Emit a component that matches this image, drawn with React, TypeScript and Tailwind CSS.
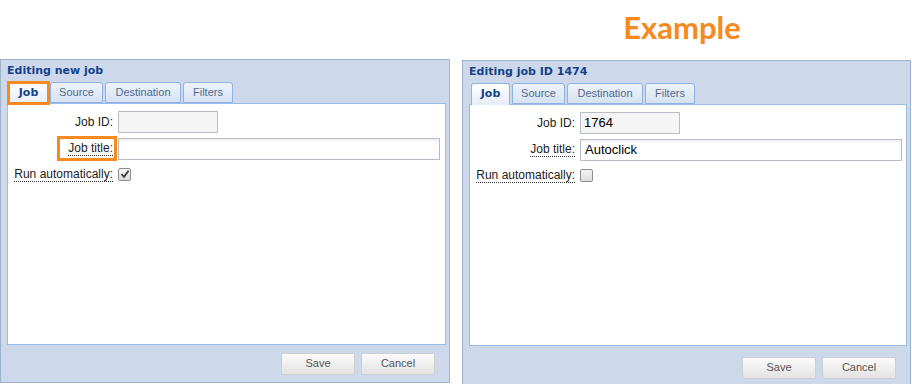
import React from "react";

const ORANGE = "#f7891f";

const Tab: React.FC<{ label: string; active?: boolean; width: string; highlight?: boolean }> = ({
  label,
  active,
  width,
  highlight,
}) => (
  <div
    className={
      "relative flex items-center justify-center rounded-t-[3px] border border-[#8db2e3] " +
      width +
      (active
        ? " h-[22px] -mb-px z-10 border-b-0 bg-gradient-to-b from-[#ffffff] to-[#e4edf9] font-['DejaVu_Sans',sans-serif] text-[11px] font-bold text-[#15428b]"
        : " h-[21px] bg-gradient-to-b from-[#eef3fa] to-[#d6e2f2] font-['Liberation_Sans',Arial,sans-serif] text-[11px] text-[#4e6a8e]")
    }
  >
    {label}
    {highlight && (
      <span className="absolute -top-[2px] -bottom-[1px] -left-[3px] -right-[3px] border-[3px] border-[#f7891f]" />
    )}
  </div>
);

const Checkbox: React.FC<{ checked?: boolean }> = ({ checked }) => (
  <div className="flex h-[13px] w-[13px] items-center justify-center rounded-[2px] border border-[#8f8f8f] bg-gradient-to-b from-[#f4f4f4] to-[#dcdcdc]">
    {checked && (
      <svg width="10" height="10" viewBox="0 0 10 10">
        <path d="M1.5 5.2 L4 7.8 L8.6 1.8" fill="none" stroke="#3a3a3a" strokeWidth="1.8" />
      </svg>
    )}
  </div>
);

const Button: React.FC<{ label: string }> = ({ label }) => (
  <button className="h-[22px] w-[74px] rounded-[2px] border border-[#cfcfcf] bg-gradient-to-b from-[#fbfbfb] to-[#e3e3e3] font-['Liberation_Sans',Arial,sans-serif] text-[11px] text-[#555]">
    {label}
  </button>
);

interface PanelProps {
  title: string;
  jobId: string;
  jobTitle: string;
  checked: boolean;
  highlight?: boolean;
  height: string;
}

const JobPanel: React.FC<PanelProps> = ({ title, jobId, jobTitle, checked, highlight, height }) => (
  <div className={"flex flex-col border border-[#9fb2cb] bg-[#cdd9ea] " + height}>
    <div className="h-[21px] pl-[6px] font-['DejaVu_Sans',sans-serif] text-[11px] font-bold leading-[21px] text-[#15428b]">
      {title}
    </div>
    <div className="flex h-[22px] items-end gap-[2px] pl-[8px]">
      <Tab label="Job" active width="w-[39px]" highlight={highlight} />
      <Tab label="Source" width="w-[53px]" />
      <Tab label="Destination" width="w-[76px]" />
      <Tab label="Filters" width="w-[50px]" />
    </div>
    <div className="ml-[6px] mr-[3px] flex h-[242px] flex-col gap-[5px] border border-[#99bbe8] bg-white pt-[7px] font-['Liberation_Sans',Arial,sans-serif] text-[12px] text-[#222]">
      <div className="flex h-[22px] items-center">
        <div className="w-[105px] text-right">Job ID:</div>
        <div className="ml-[5px] flex h-[22px] w-[100px] items-center border border-[#b8bcc4] bg-[#f5f5f5] pl-[3px] text-[13px] text-black">
          {jobId}
        </div>
      </div>
      <div className="flex h-[22px] items-center">
        <div className="flex w-[105px] justify-end">
          <span className="relative inline-block h-[22px] leading-[21px]">
            <span className="border-b border-dotted border-[#333]">Job title:</span>
            {highlight && (
              <span className="absolute -top-[2px] -bottom-[1px] -left-[11px] -right-[4px] border-[3px] border-[#f7891f]" />
            )}
          </span>
        </div>
        <div className="ml-[5px] flex h-[22px] w-[322px] items-center border border-[#b8bcc4] bg-white pl-[4px] text-[13px] text-black shadow-[inset_0_2px_2px_rgba(0,0,0,0.06)]">
          {jobTitle}
        </div>
      </div>
      <div className="flex h-[18px] items-center">
        <div className="w-[105px] whitespace-nowrap text-right">
          <span className="border-b border-dotted border-[#333]">Run automatically:</span>
        </div>
        <div className="ml-[5px]">
          <Checkbox checked={checked} />
        </div>
      </div>
    </div>
    <div className="flex flex-1 items-center justify-end gap-[6px] pr-[14px]">
      <Button label="Save" />
      <Button label="Cancel" />
    </div>
  </div>
);

export default function App() {
  return (
    <div className="h-[384px] w-[912px] overflow-hidden bg-white">
      <div className="flex h-[59px]">
        <div className="w-[462px]" />
        <div className="flex w-[440px] justify-center pt-[9px]">
          <span className="font-['Lato',sans-serif] text-[31px] font-bold leading-[36px]" style={{ color: ORANGE }}>
            Example
          </span>
        </div>
      </div>
      <div className="flex items-start gap-[12px]">
        <div className="w-[450px]">
          <JobPanel title="Editing new job" jobId="" jobTitle="" checked highlight height="h-[324px]" />
        </div>
        <div className="mt-px w-[449px]">
          <JobPanel title="Editing job ID 1474" jobId="1764" jobTitle="Autoclick" checked={false} height="h-[330px]" />
        </div>
      </div>
    </div>
  );
}
